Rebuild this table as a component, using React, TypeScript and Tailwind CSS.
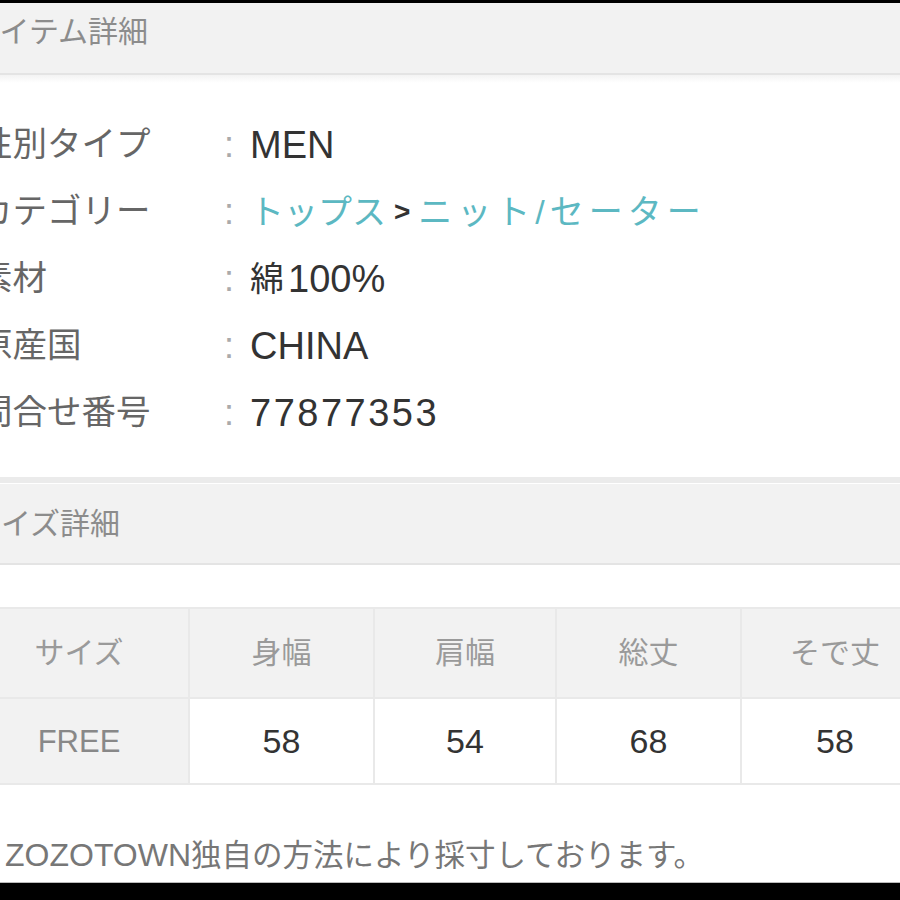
import React from "react";

const FONT = '"Liberation Sans", "Noto Sans CJK JP", sans-serif';

function Row({ label, children }: { label: string; children: React.ReactNode }) {
  return (
    <div className="flex h-[67px] items-center leading-none">
      <div className="ml-[-22px] w-[246px] shrink-0 text-[34.5px] text-[#666] whitespace-nowrap">{label}</div>
      <div className="w-[26px] shrink-0 text-[36px] text-[#aaa]">:</div>
      <div className="flex items-center whitespace-nowrap text-[#333]">{children}</div>
    </div>
  );
}

export default function App() {
  const headers = ["サイズ", "身幅", "肩幅", "総丈", "そで丈"];
  const values = ["58", "54", "68", "58"];
  return (
    <div className="flex h-[900px] w-[900px] flex-col overflow-hidden bg-white" style={{ fontFamily: FONT }}>
      <div className="h-[3px] shrink-0 bg-black" />
      {/* Header 1 */}
      <div className="flex h-[70px] shrink-0 items-center bg-[#f2f2f2] pb-[12px]">
        <span className="ml-[-29px] text-[30px] leading-none text-[#8c8c8c] whitespace-nowrap">アイテム詳細</span>
      </div>
      <div className="h-[2px] shrink-0 bg-[#e4e4e4]" />
      <div className="h-[8px] shrink-0 bg-gradient-to-b from-[#f3f3f3] to-white" />

      <div className="mt-[28px] flex flex-col">
        <Row label="性別タイプ">
          <span className="text-[38px]">MEN</span>
        </Row>
        <Row label="カテゴリー">
          <span className="text-[34px] text-[#5cb8c2]">トップス</span>
          <span className="mx-[8px] text-[28px] font-bold text-[#333]">&gt;</span>
          <span className="text-[34px] tracking-[5px] text-[#5cb8c2]">ニット/セーター</span>
        </Row>
        <Row label="素材">
          <span className="text-[34px]">綿</span>
          <span className="ml-[4px] text-[38px]">100%</span>
        </Row>
        <Row label="原産国">
          <span className="text-[38px]">CHINA</span>
        </Row>
        <Row label="問合せ番号">
          <span className="text-[38px] tracking-[2.5px]">77877353</span>
        </Row>
      </div>

      <div className="mt-[31px] h-[6px] shrink-0 bg-[#ebebeb]" />
      <div className="h-[1px] shrink-0 bg-white" />
      {/* Header 2 */}
      <div className="flex h-[79px] shrink-0 items-center bg-[#f2f2f2]">
        <span className="ml-[-29px] text-[30px] leading-none text-[#8c8c8c] whitespace-nowrap">サイズ詳細</span>
      </div>
      <div className="h-[2px] shrink-0 bg-[#e4e4e4]" />

      {/* Table */}
      <div className="mt-[42px] ml-[-30px] grid w-[960px] shrink-0 grid-cols-[218px_183px_180px_183px_186px] gap-[2px] bg-[#e9e9e9] py-[2px]">
        {headers.map((h) => (
          <div key={h} className="flex h-[88px] items-center justify-center bg-[#f2f2f2] text-[30px] leading-none text-[#9a9a9a]">
            {h}
          </div>
        ))}
        <div className="flex h-[84px] items-center justify-center bg-[#f2f2f2] text-[31px] leading-none text-[#888]">FREE</div>
        {values.map((v, i) => (
          <div key={i} className="flex h-[84px] items-center justify-center bg-white text-[34px] leading-none text-[#333]">
            {v}
          </div>
        ))}
      </div>

      <div className="mt-[54px] pl-[5px] leading-none whitespace-nowrap text-[#777]">
        <span className="text-[32px]">ZOZOTOWN</span>
        <span className="text-[30.5px]">独自の方法により採寸しております。</span>
      </div>

      <div className="flex-1" />
      <div className="h-[1px] shrink-0 bg-[#bbb]" />
      <div className="h-[17px] shrink-0 bg-black" />
    </div>
  );
}
